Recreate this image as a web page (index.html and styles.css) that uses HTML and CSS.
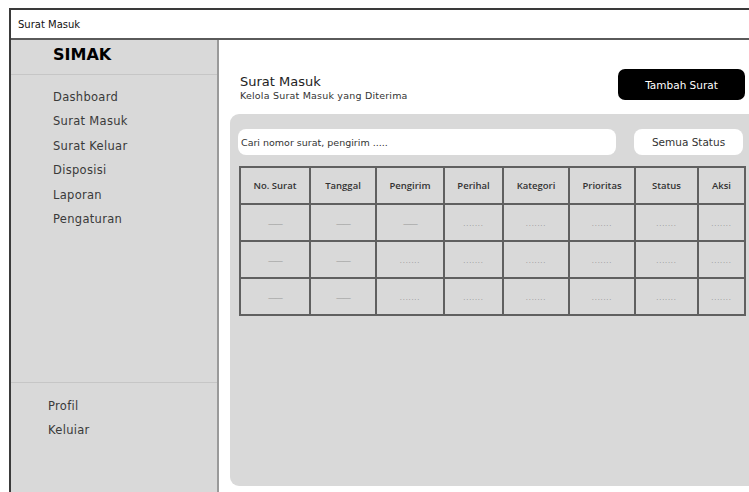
FILE: index.html
```html
<!DOCTYPE html>
<html lang="id">
<head>
<meta charset="utf-8">
<title>Surat Masuk</title>
<link rel="stylesheet" href="styles.css">
</head>
<body>
<div class="frame">
  <div class="topbar">Surat Masuk</div>
  <div class="layout">
    <aside class="sidebar">
      <div class="brand">SIMAK</div>
      <nav class="nav">
        <a class="nav-item">Dashboard</a>
        <a class="nav-item">Surat Masuk</a>
        <a class="nav-item">Surat Keluar</a>
        <a class="nav-item">Disposisi</a>
        <a class="nav-item">Laporan</a>
        <a class="nav-item">Pengaturan</a>
      </nav>
      <div class="account">
        <a class="nav-item">Profil</a>
        <a class="nav-item">Keluiar</a>
      </div>
    </aside>
    <main class="main">
      <div class="page-head">
        <div class="titles">
          <div class="title">Surat Masuk</div>
          <div class="subtitle">Kelola Surat Masuk yang Diterima</div>
        </div>
        <button class="btn-primary">Tambah Surat</button>
      </div>
      <section class="panel">
        <div class="filters">
          <div class="search">Cari nomor surat, pengirim .....</div>
          <div class="status-select">Semua Status</div>
        </div>
        <table class="grid">
          <colgroup>
            <col class="c1"><col class="c2"><col class="c3"><col class="c4">
            <col class="c5"><col class="c6"><col class="c7"><col class="c8">
          </colgroup>
          <thead>
            <tr>
              <th>No. Surat</th><th>Tanggal</th><th>Pengirim</th><th>Perihal</th>
              <th>Kategori</th><th>Prioritas</th><th>Status</th><th>Aksi</th>
            </tr>
          </thead>
          <tbody>
            <tr>
              <td class="dash">——</td><td class="dash">——</td><td class="dash">——</td>
              <td class="dots">.......</td><td class="dots">.......</td><td class="dots">.......</td>
              <td class="dots">.......</td><td class="dots">.......</td>
            </tr>
            <tr>
              <td class="dash">——</td><td class="dash">——</td><td class="dots">.......</td>
              <td class="dots">.......</td><td class="dots">.......</td><td class="dots">.......</td>
              <td class="dots">.......</td><td class="dots">.......</td>
            </tr>
            <tr>
              <td class="dash">——</td><td class="dash">——</td><td class="dots">.......</td>
              <td class="dots">.......</td><td class="dots">.......</td><td class="dots">.......</td>
              <td class="dots">.......</td><td class="dots">.......</td>
            </tr>
          </tbody>
        </table>
      </section>
    </main>
  </div>
</div>
</body>
</html>
```

FILE: styles.css
```css
html, body {
  margin: 0;
  height: 100%;
  overflow: hidden;
  background: #ffffff;
}

body {
  font-family: "DejaVu Sans", "Open Sans", sans-serif;
  color: #222;
}

.frame {
  margin: 8px 0 0 9px;
  width: 780px;
  height: 484px;
  border-left: 2px solid #3a3a3a;
  border-top: 2px solid #3a3a3a;
  display: flex;
  flex-direction: column;
}

.topbar {
  height: 28px;
  border-bottom: 2px solid #5a5a5a;
  padding-left: 7px;
  display: flex;
  align-items: center;
  font-size: 10px;
  color: #111;
}

.layout {
  flex: 1;
  display: flex;
  min-height: 0;
}

/* left navigation */
.sidebar {
  width: 206px;
  background: #d9d9d9;
  border-right: 2px solid #9a9a9a;
  display: flex;
  flex-direction: column;
}

.brand {
  height: 30px;
  padding: 4px 0 0 42px;
  border-bottom: 1px solid #c6c6c6;
  font-size: 16px;
  font-weight: 800;
  color: #000;
  line-height: 22px;
}

.nav {
  flex: 1;
  padding-top: 10px;
  padding-left: 42px;
  display: flex;
  flex-direction: column;
}

.nav-item {
  display: block;
  height: 24.4px;
  line-height: 24px;
  font-size: 11.5px;
  letter-spacing: 0.3px;
  color: #3a3a3a;
}

.account {
  height: 100px;
  border-top: 1px solid #c6c6c6;
  padding-top: 11px;
  padding-left: 37px;
}

/* content area */
.main {
  flex: 1;
  display: flex;
  flex-direction: column;
}

.page-head {
  display: flex;
  justify-content: space-between;
  align-items: flex-start;
  padding: 29px 0 0 21px;
  width: 505px;
}

.titles {
  margin-top: 5px;
}

.title {
  font-size: 13px;
  line-height: 16px;
  color: #222;
}

.subtitle {
  font-size: 9.5px;
  line-height: 11px;
  letter-spacing: 0.2px;
  color: #333;
}

.btn-primary {
  width: 127px;
  height: 31px;
  border: 0;
  border-radius: 7px;
  background: #000;
  color: #fff;
  font-family: inherit;
  font-size: 10.5px;
  padding: 0;
}

.panel {
  margin: 13px 0 0 11px;
  width: 540px;
  height: 372px;
  background: #d9d9d9;
  border-radius: 9px;
  padding: 15px 0 0 8px;
  box-sizing: border-box;
}

.filters {
  display: flex;
  gap: 18px;
}

.search,
.status-select {
  height: 26px;
  background: #fff;
  border-radius: 8px;
  font-size: 9.5px;
  color: #333;
  display: flex;
  align-items: center;
}

.search {
  width: 378px;
  padding-left: 3px;
  box-sizing: border-box;
}

.status-select {
  width: 109px;
  justify-content: center;
  font-size: 10.5px;
}

.grid {
  margin: 11px 0 0 1px;
  width: 505px;
  border-collapse: collapse;
  table-layout: fixed;
}

.grid .c1 { width: 70px; }
.grid .c2 { width: 66px; }
.grid .c3 { width: 68px; }
.grid .c4 { width: 59px; }
.grid .c5 { width: 66px; }
.grid .c6 { width: 66px; }
.grid .c7 { width: 63px; }
.grid .c8 { width: 47px; }

.grid th,
.grid td {
  border: 2px solid #606060;
  text-align: center;
  padding: 0;
}

.grid th {
  height: 35px;
  font-family: "Open Sans", "DejaVu Sans", sans-serif;
  font-size: 9.5px;
  font-weight: 600;
  color: #333;
}

.grid td {
  height: 35px;
  color: #9a9a9a;
  font-family: "Open Sans", "DejaVu Sans", sans-serif;
}

.grid td.dash {
  font-size: 8px;
  letter-spacing: -1px;
}

.grid td.dots {
  font-size: 8px;
  letter-spacing: 0.8px;
}
```
